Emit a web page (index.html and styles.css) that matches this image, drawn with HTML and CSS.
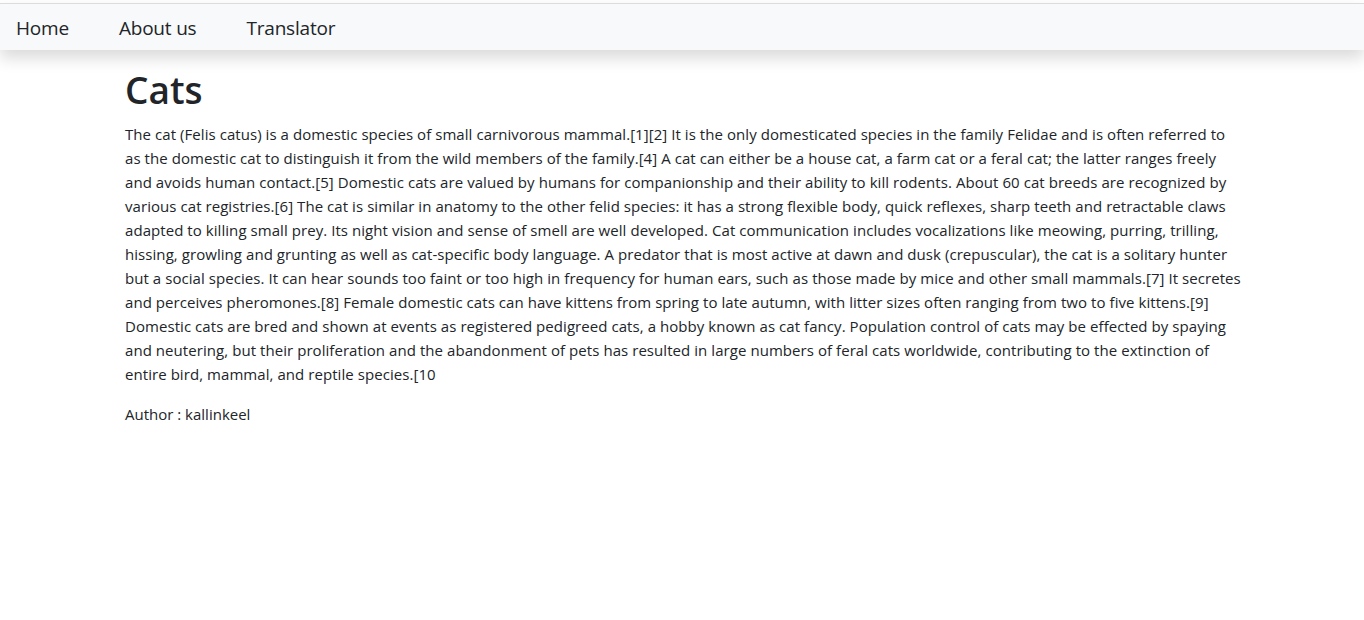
FILE: index.html
```html
<!DOCTYPE html>
<html lang="en">
<head>
<meta charset="utf-8">
<title>Cats</title>
<link rel="stylesheet" href="styles.css">
</head>
<body>
<div class="topgap"></div>
<nav class="navbar">
  <a class="nav-link" href="#">Home</a>
  <a class="nav-link" href="#">About us</a>
  <a class="nav-link" href="#">Translator</a>
</nav>
<main class="container">
  <h1 class="title">Cats</h1>
  <p class="article">The cat (Felis catus) is a domestic species of small carnivorous mammal.[1][2] It is the only domesticated species in the family Felidae and is often referred to<br>as the domestic cat to distinguish it from the wild members of the family.[4] A cat can either be a house cat, a farm cat or a feral cat; the latter ranges freely<br>and avoids human contact.[5] Domestic cats are valued by humans for companionship and their ability to kill rodents. About 60 cat breeds are recognized by<br>various cat registries.[6] The cat is similar in anatomy to the other felid species: it has a strong flexible body, quick reflexes, sharp teeth and retractable claws<br>adapted to killing small prey. Its night vision and sense of smell are well developed. Cat communication includes vocalizations like meowing, purring, trilling,<br>hissing, growling and grunting as well as cat-specific body language. A predator that is most active at dawn and dusk (crepuscular), the cat is a solitary hunter<br>but a social species. It can hear sounds too faint or too high in frequency for human ears, such as those made by mice and other small mammals.[7] It secretes<br>and perceives pheromones.[8] Female domestic cats can have kittens from spring to late autumn, with litter sizes often ranging from two to five kittens.[9]<br>Domestic cats are bred and shown at events as registered pedigreed cats, a hobby known as cat fancy. Population control of cats may be effected by spaying<br>and neutering, but their proliferation and the abandonment of pets has resulted in large numbers of feral cats worldwide, contributing to the extinction of<br>entire bird, mammal, and reptile species.[10</p>
  <p class="author">Author : kallinkeel</p>
</main>
</body>
</html>
```
FILE: styles.css
```css
* { box-sizing: border-box; }
html, body {
  margin: 0;
  padding: 0;
  background: #fff;
  color: #212529;
  font-family: "Open Sans", "Noto Sans", sans-serif;
  font-size: 15px;
  line-height: 24px;
}
.topgap {
  height: 3px;
  background: #fff;
}
.navbar {
  display: flex;
  align-items: center;
  gap: 50px;
  height: 47px;
  padding: 0 16px;
  background: #f8f9fa;
  border-top: 1px solid #dcdcdc;
  box-shadow: 0 8px 16px rgba(0, 0, 0, 0.15);
  position: relative;
  z-index: 1;
}
.nav-link {
  font-size: 19px;
  letter-spacing: -0.2px;
  color: #212529;
  text-decoration: none;
  line-height: 1;
  padding-top: 2px;
}
.container {
  width: 1140px;
  margin: 0 auto;
  padding: 16px 12px 0 13px;
}
.title {
  margin: 0 0 8px;
  font-size: 37px;
  font-weight: 600;
  line-height: 48px;
}
.article {
  margin: 0 0 16px;
  white-space: nowrap;
  letter-spacing: 0.06px;
}
.author {
  margin: 0;
}
```
